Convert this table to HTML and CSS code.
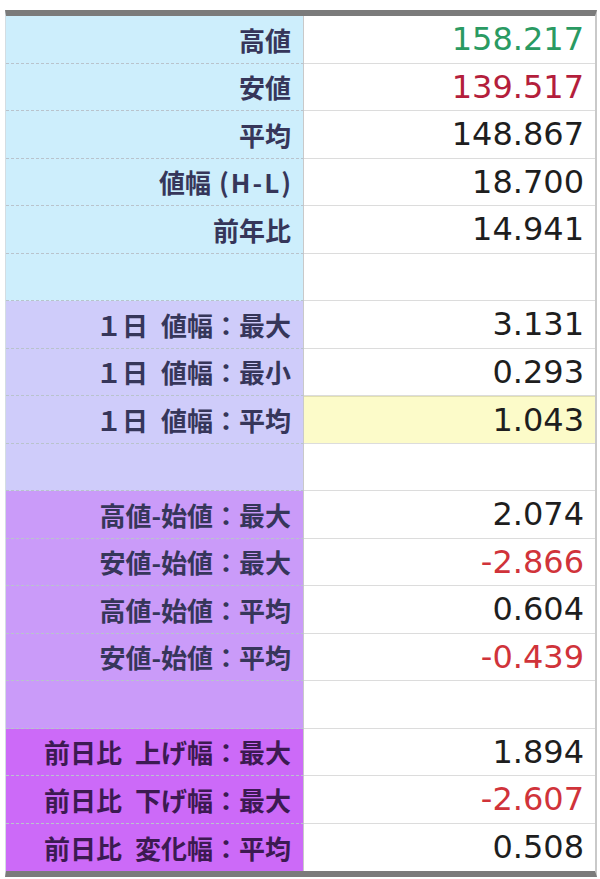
FILE: index.html
```html
<!DOCTYPE html>
<html lang="ja">
<head>
<meta charset="utf-8">
<link rel="stylesheet" href="styles.css">
</head>
<body>
<div class="sheet">
  <div class="lbl blue">高値</div><div class="val green">158.217</div>
  <div class="lbl blue">安値</div><div class="val crimson">139.517</div>
  <div class="lbl blue">平均</div><div class="val">148.867</div>
  <div class="lbl blue">値幅 <span class="paren">(H-L)</span></div><div class="val">18.700</div>
  <div class="lbl blue">前年比</div><div class="val">14.941</div>
  <div class="lbl blue"></div><div class="val"></div>

  <div class="lbl lav">１日&ensp;値幅：最大</div><div class="val">3.131</div>
  <div class="lbl lav">１日&ensp;値幅：最小</div><div class="val">0.293</div>
  <div class="lbl lav">１日&ensp;値幅：平均</div><div class="val yellow">1.043</div>
  <div class="lbl lav"></div><div class="val"></div>

  <div class="lbl purple">高値-始値：最大</div><div class="val">2.074</div>
  <div class="lbl purple">安値-始値：最大</div><div class="val red">-2.866</div>
  <div class="lbl purple">高値-始値：平均</div><div class="val">0.604</div>
  <div class="lbl purple">安値-始値：平均</div><div class="val red">-0.439</div>
  <div class="lbl purple"></div><div class="val"></div>

  <div class="lbl magenta">前日比&ensp;上げ幅：最大</div><div class="val">1.894</div>
  <div class="lbl magenta">前日比&ensp;下げ幅：最大</div><div class="val red">-2.607</div>
  <div class="lbl magenta last">前日比&ensp;変化幅：平均</div><div class="val last">0.508</div>
</div>
</body>
</html>
```

FILE: styles.css
```css
html, body {
  margin: 0;
  padding: 0;
  background: #ffffff;
}

.sheet {
  margin: 10px 0 0 5px;
  width: 589px;
  display: grid;
  grid-template-columns: 298px 291px;
  grid-auto-rows: 47.5px;
  border-top: 6px solid #7b7b7b;
  border-bottom: 6px solid #7b7b7b;
  border-left: 1px solid #d4dde2;
  border-right: 2px solid #c9c9c9;
}

.lbl {
  display: flex;
  align-items: center;
  justify-content: flex-end;
  padding-right: 12px;
  font-family: "Noto Sans CJK JP", sans-serif;
  font-weight: 700;
  font-size: 26px;
  color: #36365a;
  border-bottom: 1px dashed #b9c3cc;
  border-right: 1px solid #c9c9c9;
  white-space: pre;
}

.paren {
  letter-spacing: 2px;
  margin-right: -2px;
  margin-left: 2px;
}

.val {
  display: flex;
  align-items: center;
  justify-content: flex-end;
  padding-right: 11px;
  font-family: "DejaVu Sans", sans-serif;
  font-size: 32px;
  color: #1e1e1e;
  border-bottom: 1px solid #dcdcdc;
  background: #ffffff;
}

.last { border-bottom: none; }

.blue { background: #cdeefc; }
.lav { background: #cfccfa; }
.purple { background: #ca9bf9; }
.magenta { background: #cc6af8; color: #3c1a52; }

.green { color: #2a9a62; }
.crimson { color: #b41e3c; }
.red { color: #d0333a; }
.yellow { background: #fcfbc9; border-top: 1px solid #e2e0b0; }
```
